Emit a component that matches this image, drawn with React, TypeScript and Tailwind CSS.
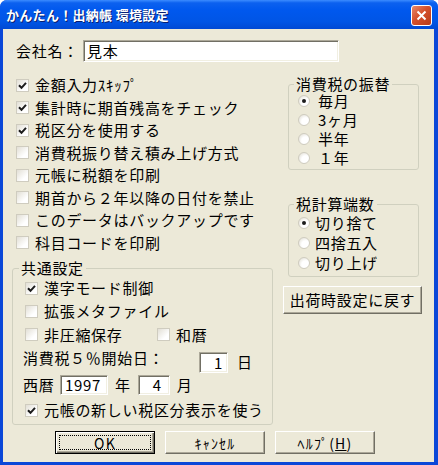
import type { ReactNode } from "react";

const boxIn =
  "bg-white border border-t-[#ACA899] border-l-[#ACA899] border-b-white border-r-white shadow-[inset_1px_1px_0_#716F64,inset_-1px_-1px_0_#F1EFE2]";
const raised =
  "bg-[#ECE9D8] border border-t-white border-l-white border-b-[#716F64] border-r-[#716F64] shadow-[inset_-1px_-1px_0_#ACA899]";

function Check({ on }: { on?: boolean }) {
  return (
    <span className="w-[13px] h-[13px] shrink-0 flex items-center justify-center border border-[#cfccbf] bg-[linear-gradient(135deg,#e2dfd5,#ffffff_70%)]">
      {on && (
        <svg width="9" height="9" viewBox="0 0 9 9">
          <path d="M1 4.2 L3.5 6.8 L8 1.8" fill="none" stroke="#1c1c1c" strokeWidth="2" />
        </svg>
      )}
    </span>
  );
}

function Radio({ on }: { on?: boolean }) {
  return (
    <span className="w-[12px] h-[12px] shrink-0 rounded-full flex items-center justify-center border border-[#cfccbf] bg-[radial-gradient(circle_at_65%_65%,#ffffff_40%,#dcd9cd)]">
      {on && <span className="w-[4px] h-[4px] rounded-full bg-[#1c1c1c]" />}
    </span>
  );
}

function CheckRow({ on, h, children }: { on?: boolean; h: string; children: ReactNode }) {
  return (
    <div className={`flex items-center gap-[6px] ${h}`}>
      <Check on={on} />
      <span>{children}</span>
    </div>
  );
}

function RadioRow({ on, h, gap, children }: { on?: boolean; h: string; gap: string; children: ReactNode }) {
  return (
    <div className={`flex items-center ${gap} ${h}`}>
      <Radio on={on} />
      <span className="leading-[16px]">{children}</span>
    </div>
  );
}

export default function App() {
  return (
    <div className="w-[438px] h-[465px] flex flex-col rounded-t-[7px] overflow-hidden bg-[#0a47d8] font-['Noto_Sans_CJK_JP','Noto_Sans_CJK_SC',sans-serif] text-[15px] tracking-[0.7px] text-black leading-[20px]">
      {/* title bar */}
      <div className="h-[29px] shrink-0 flex items-center pl-[6px] pr-[6px] bg-[linear-gradient(to_bottom,#3c8cff_0%,#0c61ef_10%,#0058ee_35%,#0055e5_75%,#0049d4_100%)]">
        <span className="text-white font-bold text-[13px] tracking-[0.3px] [text-shadow:1px_1px_0_#0a1f70]">
          かんたん！出納帳 環境設定
        </span>
        <div className="ml-auto mt-[1px] w-[21px] h-[21px] rounded-[3px] border border-white flex items-center justify-center bg-[linear-gradient(135deg,#e88a6c,#d4502c_45%,#b83a18)]">
          <svg width="11" height="11" viewBox="0 0 11 11">
            <path d="M1.5 1.5 L9.5 9.5 M9.5 1.5 L1.5 9.5" stroke="#ffffff" strokeWidth="2" />
          </svg>
        </div>
      </div>

      {/* body */}
      <div className="flex-1 ml-[3px] mr-[4px] mb-[3px] bg-[#ECE9D8] flex flex-col">
        <div className="flex items-center h-[22px] mt-[11px] pl-[13px]">
          <span className="w-[67px]">会社名：</span>
          <div className={`w-[256px] h-[22px] pl-[3px] flex items-center ${boxIn}`}>見本</div>
        </div>

        <div className="flex mt-[12px] pl-[9px]">
          {/* left column */}
          <div className="w-[261px] flex flex-col">
            <div className="pl-[4px] flex flex-col">
              <CheckRow on h="h-[22.5px]">金額入力ｽｷｯﾌﾟ</CheckRow>
              <CheckRow on h="h-[22.5px]">集計時に期首残高をチェック</CheckRow>
              <CheckRow on h="h-[22.5px]">税区分を使用する</CheckRow>
              <CheckRow h="h-[22.5px]">消費税振り替え積み上げ方式</CheckRow>
              <CheckRow h="h-[22.5px]">元帳に税額を印刷</CheckRow>
              <CheckRow h="h-[22.5px]">期首から２年以降の日付を禁止</CheckRow>
              <CheckRow h="h-[22.5px]">このデータはバックアップです</CheckRow>
              <CheckRow h="h-[22.5px]">科目コードを印刷</CheckRow>
            </div>
            <fieldset className="mt-[5px] border border-[#D0D0BF] rounded-[3px] pl-[12px] pb-[3px]">
              <legend className="ml-[-6px] px-[2px] leading-[18px]">共通設定</legend>
              <CheckRow on h="h-[22px]">漢字モード制御</CheckRow>
              <CheckRow h="h-[24px]">拡張メタファイル</CheckRow>
              <div className="flex items-center h-[23px]">
                <div className="w-[132px] flex items-center gap-[6px]">
                  <Check />
                  <span>非圧縮保存</span>
                </div>
                <div className="flex items-center gap-[6px]">
                  <Check />
                  <span>和暦</span>
                </div>
              </div>
              <div className="flex items-start h-[28px] ml-[-2px]">
                <span className="w-[176px] mt-[2px]">消費税５％開始日：</span>
                <div className={`mt-[6px] w-[29px] h-[21px] pr-[4px] flex items-center justify-end ${boxIn}`}>1</div>
                <span className="ml-[9px] mt-[6px]">日</span>
              </div>
              <div className="flex items-center h-[22px] ml-[-2px]">
                <span className="w-[37px]">西暦</span>
                <div className={`w-[48px] h-[20px] pr-[6px] flex items-center justify-end ${boxIn}`}>1997</div>
                <span className="ml-[7px]">年</span>
                <div className={`ml-[7px] w-[32px] h-[20px] pr-[7px] flex items-center justify-end ${boxIn}`}>4</div>
                <span className="ml-[7px]">月</span>
              </div>
              <div className="mt-[3px]">
                <CheckRow on h="h-[22px]">元帳の新しい税区分表示を使う</CheckRow>
              </div>
            </fieldset>
          </div>

          {/* right column */}
          <div className="ml-[10px] w-[139px] flex flex-col">
            <fieldset className="mt-[3px] ml-[5px] w-[131px] border border-[#D0D0BF] rounded-[3px] pl-[9px] pb-[1px]">
              <legend className="ml-[-4px] px-[2px] leading-[14px]">消費税の振替</legend>
              <div className="mt-[0.5px]">
                <RadioRow on h="h-[19px]" gap="gap-[8px]">毎月</RadioRow>
                <RadioRow h="h-[19px]" gap="gap-[8px]">3ヶ月</RadioRow>
                <RadioRow h="h-[19px]" gap="gap-[8px]">半年</RadioRow>
                <RadioRow h="h-[19px]" gap="gap-[8px]">１年</RadioRow>
              </div>
            </fieldset>
            <fieldset className="mt-[27.5px] ml-[5px] w-[131px] border border-[#D0D0BF] rounded-[3px] pl-[9px] pb-[3px]">
              <legend className="ml-[-4px] px-[2px] leading-[14px]">税計算端数</legend>
              <div className="mt-[2px]">
                <RadioRow on h="h-[20px]" gap="gap-[5px]">切り捨て</RadioRow>
                <RadioRow h="h-[20px]" gap="gap-[5px]">四捨五入</RadioRow>
                <RadioRow h="h-[20px]" gap="gap-[5px]">切り上げ</RadioRow>
              </div>
            </fieldset>
            <button className={`mt-[9px] h-[28px] w-[139px] flex items-center justify-center tracking-[0.7px] ${raised}`}>
              出荷時設定に戻す
            </button>
          </div>
        </div>

        {/* bottom buttons */}
        <div className="flex gap-[10px] pl-[52px] mt-[6px] text-[14px] tracking-[1.2px]">
          <button className="w-[100px] h-[23px] p-[3px] border border-black bg-[#ECE9D8] shadow-[inset_1px_1px_0_#ffffff,inset_-1px_-1px_0_#716F64,inset_-2px_-2px_0_#ACA899]">
            <span className="flex h-full w-full items-center justify-center border border-dotted border-black">OK</span>
          </button>
          <button className={`w-[100px] h-[23px] flex items-center justify-center ${raised}`}>ｷｬﾝｾﾙ</button>
          <button className={`w-[100px] h-[23px] flex items-center justify-center ${raised}`}>
            ﾍﾙﾌﾟ(<span className="underline">H</span>)
          </button>
        </div>
      </div>
    </div>
  );
}
